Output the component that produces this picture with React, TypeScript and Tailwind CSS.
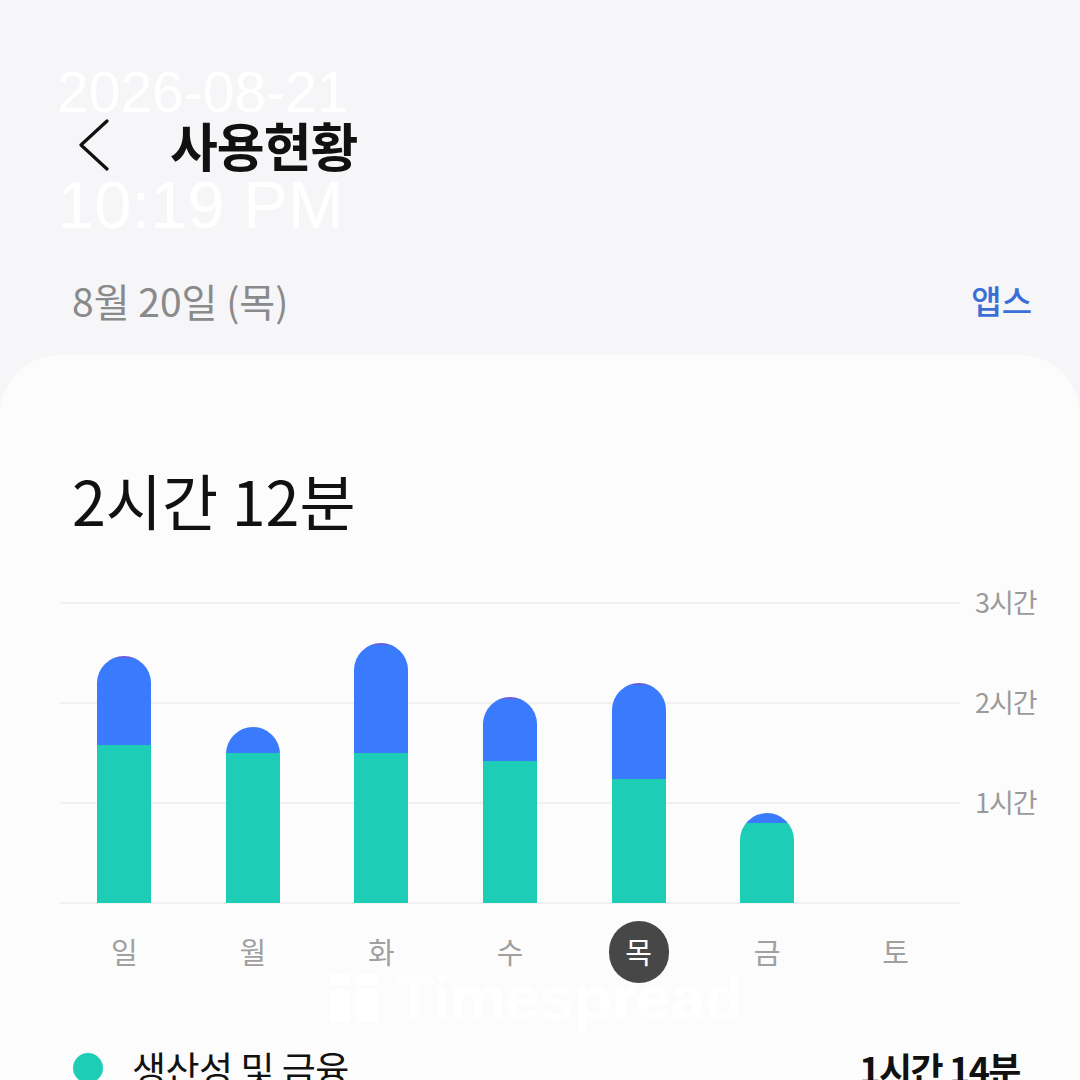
import React from "react";

type Day = {
    label: string,
    total: number,
    teal: number,
    purple?: boolean,
    selected?: boolean,
};

const days: Day[] = [
    { label: "일", total: 247, teal: 158, purple: true },
    { label: "월", total: 176, teal: 150 },
    { label: "화", total: 260, teal: 150, purple: true },
    { label: "수", total: 206, teal: 142, purple: true },
    { label: "목", total: 220, teal: 124, purple: true, selected: true },
    { label: "금", total: 90, teal: 80 },
    { label: "토", total: 0, teal: 0 },
];

const gridLines = [
    { top: 0, label: "3시간" },
    { top: 100, label: "2시간" },
    { top: 200, label: "1시간" },
    { top: 300, label: "" },
];

const font = { fontFamily: '"Noto Sans CJK KR", "Noto Sans", sans-serif' };

export default function App() {
    return (
        <div className="relative h-[1080px] w-[1080px] overflow-hidden bg-[#f6f6f8]" style={font}>
            {/* header */}
            <div className="flex items-center gap-[60px] pl-[78px] pt-[113px] h-[177px]">
                <svg width="32" height="52" viewBox="0 0 32 52" fill="none">
                    <polyline points="29,2 3,26 29,50" stroke="#111" strokeWidth="3.2" strokeLinecap="round" strokeLinejoin="round" />
                </svg>
                <span className="text-[52px] leading-[64px] font-bold text-[#111] tracking-[-1px]">사용현황</span>
            </div>

            <div className="mt-[99px] flex items-center justify-between h-[48px] pl-[72px] pr-[48px]">
                <span className="text-[39px] leading-[48px] text-[#8a8a8a]">8월 20일 (목)</span>
                <span className="text-[33px] leading-[48px] text-[#3a6fd8] font-medium">앱스</span>
            </div>

            {/* card */}
            <div className="mt-[31px] rounded-t-[60px] bg-[#fcfcfc] h-[800px]">
                <div className="pt-[109px] pl-[72px] h-[181px]">
                    <span className="text-[61px] leading-[72px] text-[#111]">2시간 12분</span>
                </div>

                <div className="relative mt-[66px] ml-[60px] w-[900px] h-[300px]">
                    {gridLines.map((g) => (
                        <div key={g.top} className="absolute left-0 h-[2px] w-[900px] bg-[#f0f0f0]" style={{ top: g.top }}>
                            {g.label && (
                                <span className="absolute left-[915px] top-[-20px] text-[27px] leading-[40px] text-[#9a9a9a] whitespace-nowrap tracking-[-1px]">{g.label}</span>
                            )}
                        </div>
                    ))}
                    <div className="relative grid grid-cols-7 h-[301px] items-end">
                        {days.map((d) => (
                            <div key={d.label} className="flex justify-center">
                                {d.total > 0 && (
                                    <div className="flex flex-col w-[54px] rounded-t-[27px] overflow-hidden" style={{ height: d.total }}>
                                        {d.purple && <div className="h-[2px] bg-[#6a5ad8]" />}
                                        <div className="flex-1 bg-[#3a7afd]" />
                                        <div className="bg-[#1ecdb6]" style={{ height: d.teal }} />
                                    </div>
                                )}
                            </div>
                        ))}
                    </div>
                </div>

                <div className="mt-[19px] ml-[60px] w-[900px] grid grid-cols-7 h-[62px]">
                    {days.map((d) => (
                        <div key={d.label} className="flex justify-center items-center">
                            {d.selected ? (
                                <div className="flex items-center justify-center w-[60px] h-[62px] rounded-full bg-[#474747] text-white text-[29px]">{d.label}</div>
                            ) : (
                                <span className="text-[29px] text-[#a0a0a0]">{d.label}</span>
                            )}
                        </div>
                    ))}
                </div>

                <div className="mt-[61px] flex items-center justify-between h-[48px] pl-[73px] pr-[60px]">
                    <div className="flex items-center gap-[29px]">
                        <div className="w-[30px] h-[30px] rounded-full bg-[#1ecdb6]" />
                        <span className="text-[37px] leading-[48px] text-[#111] tracking-[-0.5px]">생산성 및 금융</span>
                    </div>
                    <span className="text-[36px] leading-[48px] text-[#111] font-bold tracking-[-1.5px]">1시간 14분</span>
                </div>
            </div>

            {/* watermark */}
            <div className="absolute left-[330px] top-[966px] flex items-center gap-[18px] text-white">
                <svg width="48" height="48" viewBox="0 0 48 48" fill="#fff">
                    <rect x="0" y="0" width="20" height="11" />
                    <rect x="0" y="15" width="20" height="33" />
                    <rect x="26" y="0" width="22" height="11" />
                    <rect x="26" y="15" width="22" height="33" />
                </svg>
                <span className="text-[62px] leading-[64px] font-bold" style={{ fontFamily: '"Liberation Sans", Arial, sans-serif' }}>Timespread</span>
            </div>

            {/* date/time overlay */}
            <div className="absolute left-[57px] top-[64px] text-white leading-none" style={{ fontFamily: '"Liberation Sans", Arial, sans-serif' }}>
                <div className="text-[57px] leading-none">2026-08-21</div>
            </div>
            <div className="absolute left-[57px] top-[171px] text-white leading-none" style={{ fontFamily: '"Liberation Sans", Arial, sans-serif' }}>
                <div className="text-[67px] leading-none">10:19 PM</div>
            </div>
        </div>
    );
}
